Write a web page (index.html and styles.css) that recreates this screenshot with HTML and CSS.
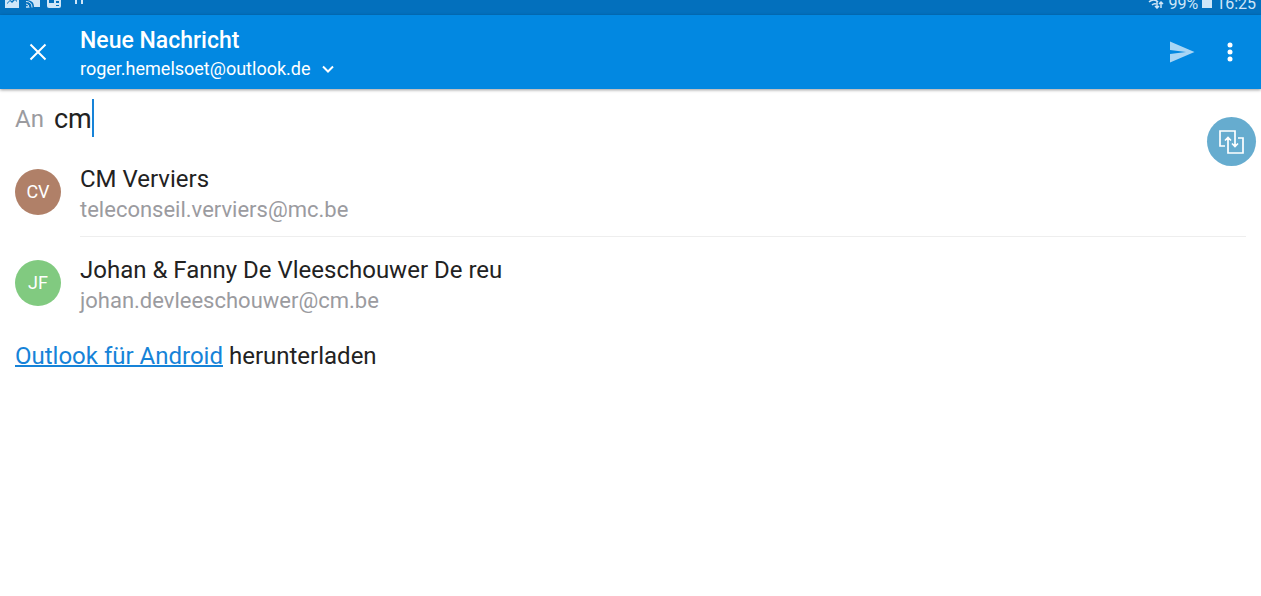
FILE: index.html
```html
<!doctype html>
<html lang="de">
  <head>
    <meta charset="utf-8">
    <meta name="viewport" content="width=device-width, initial-scale=1.0">
    <title>Neue Nachricht</title>
    <link rel="stylesheet" href="styles.css">
  </head>
  <body>
    <div class="statusbar">
      <div class="notifications">
        <svg width="16" height="16" viewBox="0 0 16 16"><path fill="currentColor" d="M1 1h14v14H1z"/><path fill="#0370bd" d="M3 11l3-3 2 2 3-3 2 2v-1l-2-3-3 3-2-1-3 3z"/></svg>
        <svg width="16" height="16" viewBox="0 0 16 16"><path fill="currentColor" d="M1 1h14v13H9C9 9 6 7 1 7z"/><path fill="none" stroke="currentColor" stroke-width="1" d="M1 8.5q6 0 6 6M1 11q3 0 3 4"/><circle cx="2" cy="14" r="1" fill="currentColor"/></svg>
        <svg width="16" height="16" viewBox="0 0 16 16"><rect x="1" y="1" width="14" height="14" rx="2" fill="currentColor"/><path fill="#0370bd" d="M3 5h5v5H3zM10 8h3v2h-3zM10 12h3v1h-3z"/></svg>
        <svg width="20" height="16" viewBox="0 0 20 16"><path fill="currentColor" d="M8 5h2v6H8zM14 5h2v6h-2z"/></svg>
      </div>
      <div class="system">
        <svg width="16" height="16" viewBox="0 0 16 16"><path fill="none" stroke="currentColor" stroke-width="1.5" d="M1 9q5-4 9 0M4 12q2-2 4-1M9 8v7M7 13l2 2 2-2M13 15V9M11 11l2-2 2 2"/></svg>
        <span>99%</span>
        <svg class="battery" width="10" height="16" viewBox="0 0 10 16"><path fill="currentColor" d="M3 0h4v2h3v13H0V2h3z"/></svg>
        <span>16:25</span>
      </div>
    </div>

    <header class="toolbar">
      <button class="icon-btn" type="button" aria-label="Schließen">
        <svg width="24" height="24" viewBox="0 0 24 24"><path fill="none" stroke="currentColor" stroke-width="2" d="M4.500 4.500l15 15M19.500 4.500l-15 15"/></svg>
      </button>
      <div class="heading">
        <h1>Neue Nachricht</h1>
        <button class="account" type="button">
          roger.hemelsoet@outlook.de
          <svg width="12" height="12" viewBox="0 0 12 12"><path fill="none" stroke="currentColor" stroke-width="2" d="M1 3.500l5 5 5-5"/></svg>
        </button>
      </div>
      <button class="icon-btn send" type="button" aria-label="Senden">
        <svg width="26" height="24" viewBox="0 0 26 24"><path fill="currentColor" d="M1 1.500L25.500 12 1 22.500V14l16-2L1 10z"/></svg>
      </button>
      <button class="icon-btn" type="button" aria-label="Weitere Optionen">
        <svg width="6" height="20" viewBox="0 0 6 20"><g fill="currentColor"><circle cx="3" cy="3" r="2.500"/><circle cx="3" cy="10" r="2.500"/><circle cx="3" cy="17" r="2.500"/></g></svg>
      </button>
    </header>

    <main>
      <div class="recipient">
        <label for="to">An</label>
        <input type="text" id="to" name="to" value="cm" size="2" autocomplete="off">
        <span class="caret"></span>
      </div>

      <ul class="suggestions">
        <li>
          <span class="avatar brown">CV</span>
          <div class="contact">
            <div class="name">CM Verviers</div>
            <div class="mail">teleconseil.verviers@mc.be</div>
          </div>
        </li>
        <li>
          <span class="avatar green">JF</span>
          <div class="contact">
            <div class="name">Johan &amp; Fanny De Vleeschouwer De reu</div>
            <div class="mail">johan.devleeschouwer@cm.be</div>
          </div>
        </li>
      </ul>

      <p class="signature"><a href="#">Outlook für Android</a> herunterladen</p>
    </main>

    <button class="floating" type="button" aria-label="Fenster wechseln">
      <svg width="25" height="24" viewBox="0 0 25 24"><path fill="none" stroke="currentColor" stroke-width="1.7" d="M6 16H1V1h15v15.500M13 13.500l3 3 3-3M19 8h5v15H9V7.500M6 10.500l3-3 3 3"/></svg>
    </button>
  </body>
</html>
```

FILE: styles.css
```css
* {
    box-sizing: border-box;
}
body {
    margin: 0;
    font-family: Roboto, sans-serif;
    background-color: #ffffff;
    color: #222222;
}
button {
    padding: 0;
    border: 0;
    background: none;
    font-family: inherit;
    color: inherit;
    cursor: pointer;
}
svg {
    display: block;
    flex: none;
}

/* Status bar, partly scrolled off the top */
.statusbar {
    display: flex;
    justify-content: space-between;
    align-items: flex-end;
    height: 15px;
    padding: 0 5px 6px 4px;
    overflow: hidden;
    background-color: #0370bd;
    color: #cfe6f8;
}
.notifications,
.system {
    display: flex;
    align-items: flex-end;
}
.notifications {
    gap: 5px;
}
.system {
    gap: 4px;
    font-size: 16px;
    line-height: 11px;
}

/* Toolbar */
.toolbar {
    display: flex;
    align-items: center;
    height: 74px;
    padding-left: 14px;
    padding-right: 7px;
    background-color: #0288e1;
    color: #ffffff;
    box-shadow: 0 1px 3px rgba(0, 0, 0, 0.4);
}
.icon-btn {
    display: flex;
    align-items: center;
    justify-content: center;
    width: 48px;
    height: 48px;
}
.send {
    color: #a9d6f5;
}
.heading {
    flex: 1;
    padding-top: 6px;
    padding-left: 18px;
}
h1 {
    margin: 0;
    font-size: 23px;
    font-weight: 500;
    line-height: 28px;
}
.account {
    display: flex;
    align-items: center;
    gap: 12px;
    font-size: 18px;
    line-height: 28px;
}

/* Recipient line */
.recipient {
    display: flex;
    align-items: center;
    height: 57px;
    padding: 0 15px;
}
label {
    padding-top: 3px;
    margin-right: 10px;
    font-size: 24px;
    color: #9b9b9f;
}
input {
    field-sizing: content;
    padding: 3px 0 0;
    border: 0;
    outline: 0;
    font-family: inherit;
    font-size: 27px;
    color: inherit;
}
.caret {
    width: 2px;
    height: 38px;
    background-color: #1683d8;
}

/* Contacts */
.suggestions {
    margin: 0;
    padding: 0 15px;
    list-style: none;
}
li {
    display: flex;
    align-items: center;
    gap: 19px;
}
.avatar {
    display: flex;
    align-items: center;
    justify-content: center;
    flex: none;
    width: 46px;
    height: 46px;
    border-radius: 50%;
    font-size: 18px;
    color: #ffffff;
}
.brown {
    background-color: #b08068;
}
.green {
    background-color: #81ca80;
}
.contact {
    flex: 1;
    padding: 17px 0 11px;
    border-bottom: 1px solid #eeeeee;
}
li:last-child .contact {
    border-bottom-color: transparent;
}
.name {
    font-size: 24px;
    line-height: 32px;
}
.mail {
    font-size: 22px;
    line-height: 30px;
    color: #9b9b9f;
}
.signature {
    margin: 12px 15px;
    font-size: 24px;
    line-height: 32px;
}
a {
    color: #1683d8;
    text-decoration-thickness: 2px;
}

/* Sits over the message */
.floating {
    position: absolute;
    top: 117px;
    right: 5px;
    display: flex;
    align-items: center;
    justify-content: center;
    width: 49px;
    height: 49px;
    border-radius: 50%;
    background-color: #66accf;
    color: #ffffff;
}
```
